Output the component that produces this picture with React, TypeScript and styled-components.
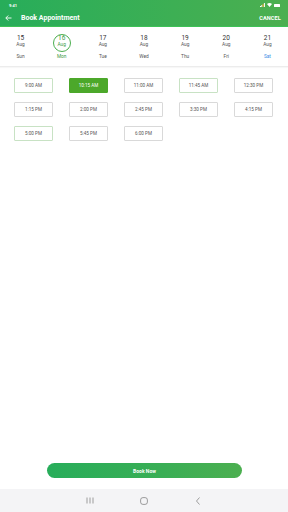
import React, { useState } from "react";
import styled, { createGlobalStyle } from "styled-components";

const Global = createGlobalStyle`
  html, body { margin: 0; padding: 0; background: #fff; }
  body { font-family: Roboto, "Noto Sans", Arial, sans-serif; }
  * { box-sizing: border-box; }
`;

const Page = styled.div`
  width: 288px;
  height: 512px;
  display: flex;
  flex-direction: column;
  background: #fff;
  overflow: hidden;
`;

const Header = styled.header`
  background: linear-gradient(90deg, #27ad5a 0%, #3daf54 60%, #4caf50 100%);
  color: #fff;
  height: 27px;
  display: flex;
  flex-direction: column;
  border-bottom: 1px solid #3ec257;
`;

const StatusBar = styled.div`
  height: 10px;
  display: flex;
  align-items: center;
  justify-content: space-between;
  padding: 0 8px 0 9px;
  font-size: 4px;
  font-weight: 700;
`;

const StatusIcons = styled.div`
  display: flex;
  align-items: center;
  gap: 2px;
`;

const Toolbar = styled.div`
  flex: 1;
  display: flex;
  align-items: center;
  padding: 0 7px 1px 5px;
`;

const BackBtn = styled.div`
  width: 10px;
  display: flex;
  align-items: center;
`;

const Title = styled.div`
  margin-left: 6px;
  font-size: 7px;
  font-weight: 700;
  flex: 1;
`;

const Cancel = styled.div`
  font-size: 5.6px;
  font-weight: 700;
  letter-spacing: 0.1px;
`;

const DateRow = styled.div`
  display: grid;
  grid-template-columns: repeat(7, 1fr);
  height: 40px;
  border-bottom: 1px solid #ececec;
  box-shadow: 0 1px 1px rgba(0, 0, 0, 0.03);
`;

const DateCell = styled.div`
  display: flex;
  flex-direction: column;
  align-items: center;
  padding-top: 8px;
  position: relative;
`;

const Circle = styled.div`
  position: absolute;
  top: 6.5px;
  width: 18px;
  height: 18px;
  border-radius: 50%;
  border: 0.8px solid #4caf50;
`;

const DayNum = styled.div<{ $sel?: boolean }>`
  font-size: 6.5px;
  line-height: 7px;
  color: ${(p) => (p.$sel ? "#3d9a45" : "#333")};
`;

const Month = styled.div<{ $sel?: boolean }>`
  font-size: 4.8px;
  line-height: 6px;
  color: ${(p) => (p.$sel ? "#3d9a45" : "#555")};
`;

const WeekDay = styled.div<{ $color: string }>`
  font-size: 4.8px;
  line-height: 6px;
  margin-top: 6px;
  color: ${(p) => p.$color};
`;

const Slots = styled.div`
  display: grid;
  grid-template-columns: repeat(5, 39px);
  column-gap: 16px;
  row-gap: 9px;
  padding: 11px 0 0 14px;
`;

const Slot = styled.div<{ $sel?: boolean; $green?: boolean }>`
  height: 15px;
  display: flex;
  align-items: center;
  justify-content: center;
  font-size: 4.6px;
  border-radius: 1px;
  color: ${(p) => (p.$sel ? "#fff" : "#555")};
  background: ${(p) => (p.$sel ? "#4ca82a" : "#fff")};
  border: 0.8px solid ${(p) => (p.$sel ? "#4ca82a" : p.$green ? "#c8e2c4" : "#d9d9d9")};
`;

const Spacer = styled.div`
  flex: 1;
`;

const BookWrap = styled.div`
  display: flex;
  justify-content: center;
  padding: 0 0 11px 1px;
`;

const BookBtn = styled.button`
  width: 195px;
  height: 15px;
  border: none;
  border-radius: 8px;
  background: linear-gradient(90deg, #27ad5a 0%, #3aae55 60%, #4caf50 100%);
  color: #fff;
  font-family: Roboto, Arial, sans-serif;
  font-size: 5px;
  font-weight: 700;
  padding: 0;
`;

const NavBar = styled.nav`
  height: 23px;
  background: #f4f4f6;
  display: flex;
  align-items: center;
  justify-content: center;
`;

const NavItem = styled.div`
  width: 54px;
  display: flex;
  justify-content: center;
  align-items: center;
`;

const days = [
  { n: "15", d: "Sun" },
  { n: "16", d: "Mon", sel: true },
  { n: "17", d: "Tue" },
  { n: "18", d: "Wed" },
  { n: "19", d: "Thu" },
  { n: "20", d: "Fri" },
  { n: "21", d: "Sat", sat: true },
];

const slots = [
  { t: "9:00 AM", g: true },
  { t: "10:15 AM", sel: true },
  { t: "11:00 AM" },
  { t: "11:45 AM", g: true },
  { t: "12:30 PM" },
  { t: "1:15 PM" },
  { t: "2:00 PM" },
  { t: "2:45 PM" },
  { t: "3:30 PM" },
  { t: "4:15 PM" },
  { t: "5:00 PM", g: true },
  { t: "5:45 PM" },
  { t: "6:00 PM" },
];

export default function App() {
  const [sel, setSel] = useState(1);
  return (
    <Page>
      <Global />
      <Header>
        <StatusBar>
          <span>9:41</span>
          <StatusIcons>
            <svg width="5" height="4" viewBox="0 0 5 4">
              <rect x="0" y="3" width="1" height="1" fill="#fff" />
              <rect x="1.3" y="2" width="1" height="2" fill="#fff" />
              <rect x="2.6" y="1" width="1" height="3" fill="#f5a623" />
              <rect x="3.9" y="0" width="1" height="4" fill="#fff" />
            </svg>
            <svg width="5" height="4" viewBox="0 0 10 8">
              <path d="M5 8 L0 2 Q5 -2 10 2 Z" fill="#fff" />
            </svg>
            <svg width="6" height="3" viewBox="0 0 6 3">
              <rect x="0" y="0" width="6" height="3" rx="0.5" fill="#fff" />
            </svg>
          </StatusIcons>
        </StatusBar>
        <Toolbar>
          <BackBtn>
            <svg width="7" height="6" viewBox="0 0 14 12">
              <path d="M13 6 H2 M6.5 1 L1.5 6 L6.5 11" stroke="#fff" strokeWidth="1.8" fill="none" />
            </svg>
          </BackBtn>
          <Title>Book Appointment</Title>
          <Cancel>CANCEL</Cancel>
        </Toolbar>
      </Header>
      <DateRow>
        {days.map((d) => (
          <DateCell key={d.n}>
            {d.sel && <Circle />}
            <DayNum $sel={d.sel}>{d.n}</DayNum>
            <Month $sel={d.sel}>Aug</Month>
            <WeekDay $color={d.sel ? "#3d9a45" : d.sat ? "#3a8ee6" : "#555"}>{d.d}</WeekDay>
          </DateCell>
        ))}
      </DateRow>
      <Slots>
        {slots.map((s, i) => (
          <Slot key={s.t} $sel={i === sel} $green={s.g} onClick={() => setSel(i)}>
            {s.t}
          </Slot>
        ))}
      </Slots>
      <Spacer />
      <BookWrap>
        <BookBtn>Book Now</BookBtn>
      </BookWrap>
      <NavBar>
        <NavItem>
          <svg width="8" height="7" viewBox="0 0 8 7">
            <path d="M1 0.5 V6.5 M4 0.5 V6.5 M7 0.5 V6.5" stroke="#777" strokeWidth="0.7" />
          </svg>
        </NavItem>
        <NavItem>
          <svg width="8" height="8" viewBox="0 0 8 8">
            <rect x="0.6" y="0.6" width="6.8" height="6.8" rx="2.3" stroke="#777" strokeWidth="0.7" fill="none" />
          </svg>
        </NavItem>
        <NavItem>
          <svg width="6" height="8" viewBox="0 0 6 8">
            <path d="M4.5 0.5 L1.5 4 L4.5 7.5" stroke="#777" strokeWidth="0.7" fill="none" />
          </svg>
        </NavItem>
      </NavBar>
    </Page>
  );
}
